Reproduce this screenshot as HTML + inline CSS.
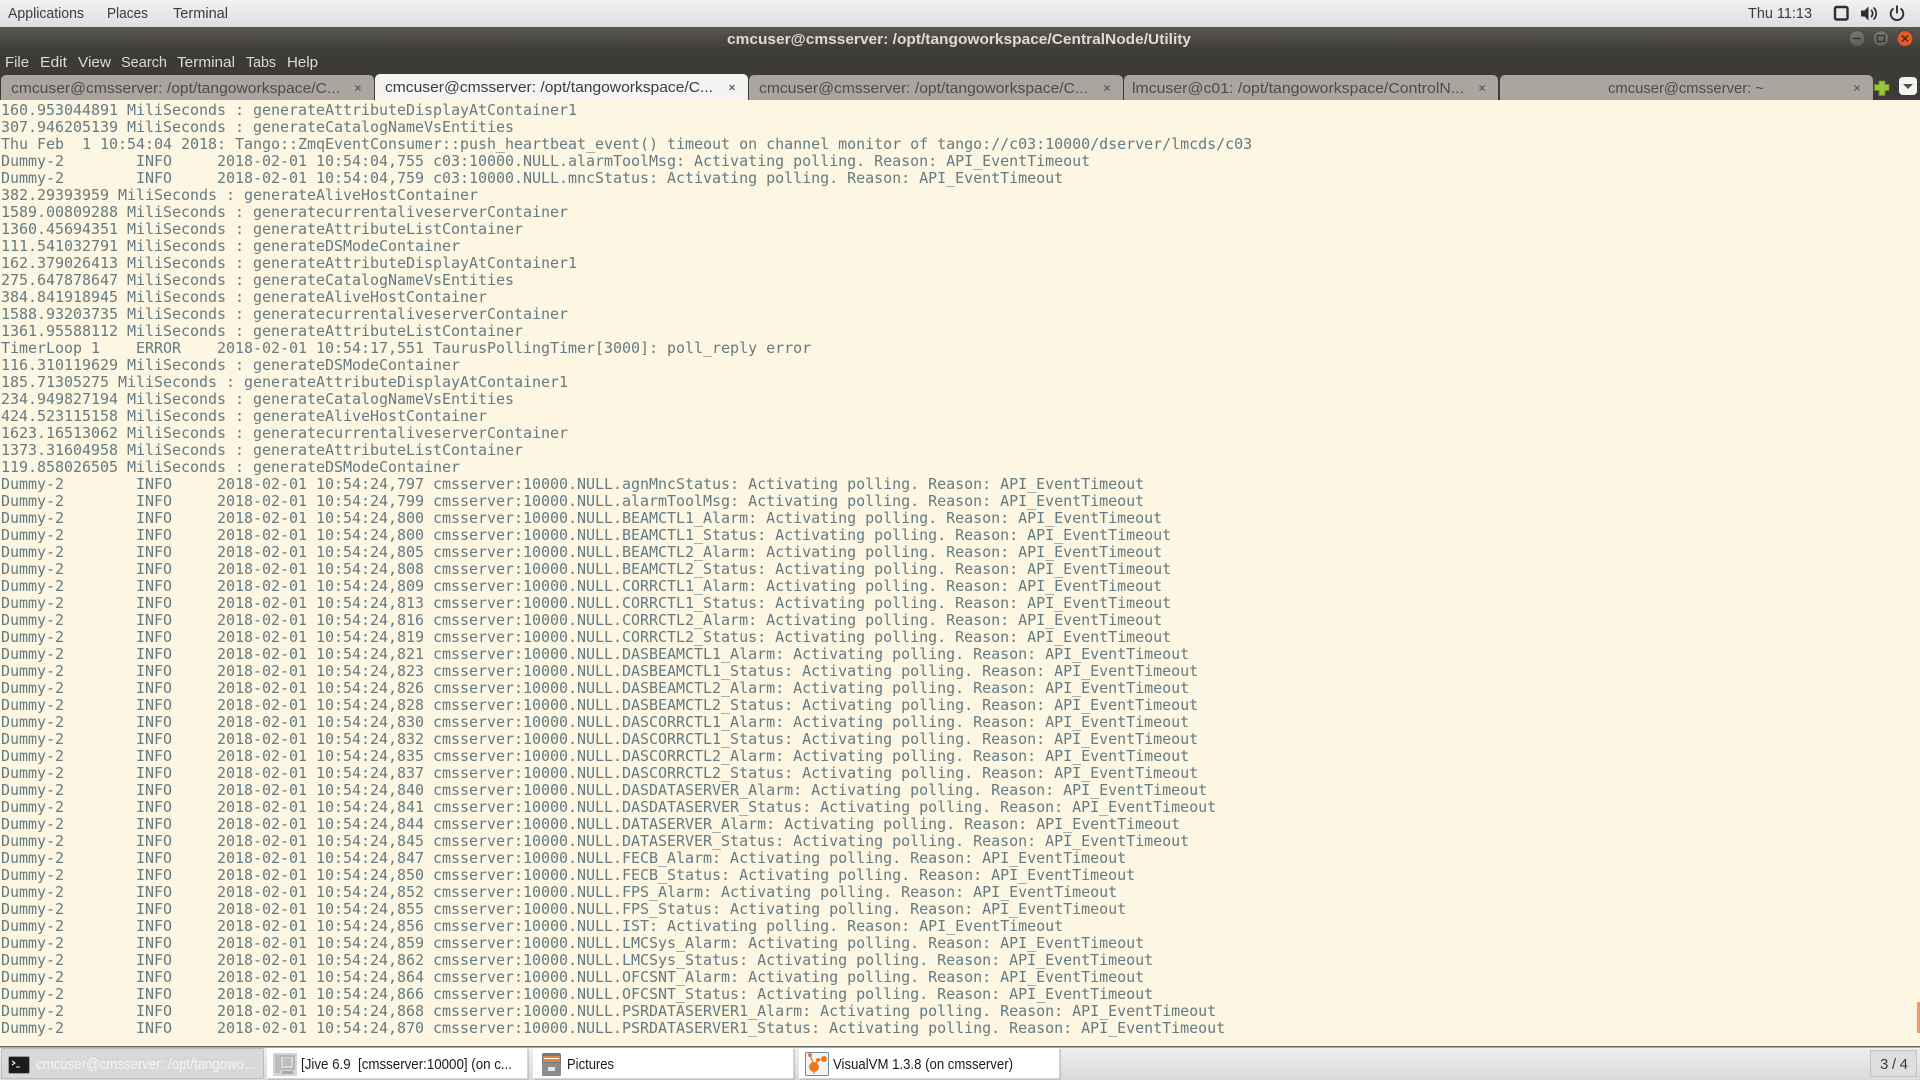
<!DOCTYPE html>
<html><head><meta charset="utf-8"><style>
html,body{margin:0;padding:0;width:1920px;height:1080px;overflow:hidden;background:#fdf6e3}
#t{position:absolute;left:1px;top:102px;margin:0;font:15px/17px "DejaVu Sans Mono",monospace;letter-spacing:-0.03px;color:#657b83;white-space:pre}
svg{position:absolute;left:0;top:0}
svg text{font-family:"Liberation Sans",sans-serif;font-size:15px;white-space:pre}
</style></head><body>
<pre id="t">160.953044891 MiliSeconds : generateAttributeDisplayAtContainer1
307.946205139 MiliSeconds : generateCatalogNameVsEntities
Thu Feb  1 10:54:04 2018: Tango::ZmqEventConsumer::push_heartbeat_event() timeout on channel monitor of tango://c03:10000/dserver/lmcds/c03
Dummy-2        INFO     2018-02-01 10:54:04,755 c03:10000.NULL.alarmToolMsg: Activating polling. Reason: API_EventTimeout
Dummy-2        INFO     2018-02-01 10:54:04,759 c03:10000.NULL.mncStatus: Activating polling. Reason: API_EventTimeout
382.29393959 MiliSeconds : generateAliveHostContainer
1589.00809288 MiliSeconds : generatecurrentaliveserverContainer
1360.45694351 MiliSeconds : generateAttributeListContainer
111.541032791 MiliSeconds : generateDSModeContainer
162.379026413 MiliSeconds : generateAttributeDisplayAtContainer1
275.647878647 MiliSeconds : generateCatalogNameVsEntities
384.841918945 MiliSeconds : generateAliveHostContainer
1588.93203735 MiliSeconds : generatecurrentaliveserverContainer
1361.95588112 MiliSeconds : generateAttributeListContainer
TimerLoop 1    ERROR    2018-02-01 10:54:17,551 TaurusPollingTimer[3000]: poll_reply error
116.310119629 MiliSeconds : generateDSModeContainer
185.71305275 MiliSeconds : generateAttributeDisplayAtContainer1
234.949827194 MiliSeconds : generateCatalogNameVsEntities
424.523115158 MiliSeconds : generateAliveHostContainer
1623.16513062 MiliSeconds : generatecurrentaliveserverContainer
1373.31604958 MiliSeconds : generateAttributeListContainer
119.858026505 MiliSeconds : generateDSModeContainer
Dummy-2        INFO     2018-02-01 10:54:24,797 cmsserver:10000.NULL.agnMncStatus: Activating polling. Reason: API_EventTimeout
Dummy-2        INFO     2018-02-01 10:54:24,799 cmsserver:10000.NULL.alarmToolMsg: Activating polling. Reason: API_EventTimeout
Dummy-2        INFO     2018-02-01 10:54:24,800 cmsserver:10000.NULL.BEAMCTL1_Alarm: Activating polling. Reason: API_EventTimeout
Dummy-2        INFO     2018-02-01 10:54:24,800 cmsserver:10000.NULL.BEAMCTL1_Status: Activating polling. Reason: API_EventTimeout
Dummy-2        INFO     2018-02-01 10:54:24,805 cmsserver:10000.NULL.BEAMCTL2_Alarm: Activating polling. Reason: API_EventTimeout
Dummy-2        INFO     2018-02-01 10:54:24,808 cmsserver:10000.NULL.BEAMCTL2_Status: Activating polling. Reason: API_EventTimeout
Dummy-2        INFO     2018-02-01 10:54:24,809 cmsserver:10000.NULL.CORRCTL1_Alarm: Activating polling. Reason: API_EventTimeout
Dummy-2        INFO     2018-02-01 10:54:24,813 cmsserver:10000.NULL.CORRCTL1_Status: Activating polling. Reason: API_EventTimeout
Dummy-2        INFO     2018-02-01 10:54:24,816 cmsserver:10000.NULL.CORRCTL2_Alarm: Activating polling. Reason: API_EventTimeout
Dummy-2        INFO     2018-02-01 10:54:24,819 cmsserver:10000.NULL.CORRCTL2_Status: Activating polling. Reason: API_EventTimeout
Dummy-2        INFO     2018-02-01 10:54:24,821 cmsserver:10000.NULL.DASBEAMCTL1_Alarm: Activating polling. Reason: API_EventTimeout
Dummy-2        INFO     2018-02-01 10:54:24,823 cmsserver:10000.NULL.DASBEAMCTL1_Status: Activating polling. Reason: API_EventTimeout
Dummy-2        INFO     2018-02-01 10:54:24,826 cmsserver:10000.NULL.DASBEAMCTL2_Alarm: Activating polling. Reason: API_EventTimeout
Dummy-2        INFO     2018-02-01 10:54:24,828 cmsserver:10000.NULL.DASBEAMCTL2_Status: Activating polling. Reason: API_EventTimeout
Dummy-2        INFO     2018-02-01 10:54:24,830 cmsserver:10000.NULL.DASCORRCTL1_Alarm: Activating polling. Reason: API_EventTimeout
Dummy-2        INFO     2018-02-01 10:54:24,832 cmsserver:10000.NULL.DASCORRCTL1_Status: Activating polling. Reason: API_EventTimeout
Dummy-2        INFO     2018-02-01 10:54:24,835 cmsserver:10000.NULL.DASCORRCTL2_Alarm: Activating polling. Reason: API_EventTimeout
Dummy-2        INFO     2018-02-01 10:54:24,837 cmsserver:10000.NULL.DASCORRCTL2_Status: Activating polling. Reason: API_EventTimeout
Dummy-2        INFO     2018-02-01 10:54:24,840 cmsserver:10000.NULL.DASDATASERVER_Alarm: Activating polling. Reason: API_EventTimeout
Dummy-2        INFO     2018-02-01 10:54:24,841 cmsserver:10000.NULL.DASDATASERVER_Status: Activating polling. Reason: API_EventTimeout
Dummy-2        INFO     2018-02-01 10:54:24,844 cmsserver:10000.NULL.DATASERVER_Alarm: Activating polling. Reason: API_EventTimeout
Dummy-2        INFO     2018-02-01 10:54:24,845 cmsserver:10000.NULL.DATASERVER_Status: Activating polling. Reason: API_EventTimeout
Dummy-2        INFO     2018-02-01 10:54:24,847 cmsserver:10000.NULL.FECB_Alarm: Activating polling. Reason: API_EventTimeout
Dummy-2        INFO     2018-02-01 10:54:24,850 cmsserver:10000.NULL.FECB_Status: Activating polling. Reason: API_EventTimeout
Dummy-2        INFO     2018-02-01 10:54:24,852 cmsserver:10000.NULL.FPS_Alarm: Activating polling. Reason: API_EventTimeout
Dummy-2        INFO     2018-02-01 10:54:24,855 cmsserver:10000.NULL.FPS_Status: Activating polling. Reason: API_EventTimeout
Dummy-2        INFO     2018-02-01 10:54:24,856 cmsserver:10000.NULL.IST: Activating polling. Reason: API_EventTimeout
Dummy-2        INFO     2018-02-01 10:54:24,859 cmsserver:10000.NULL.LMCSys_Alarm: Activating polling. Reason: API_EventTimeout
Dummy-2        INFO     2018-02-01 10:54:24,862 cmsserver:10000.NULL.LMCSys_Status: Activating polling. Reason: API_EventTimeout
Dummy-2        INFO     2018-02-01 10:54:24,864 cmsserver:10000.NULL.OFCSNT_Alarm: Activating polling. Reason: API_EventTimeout
Dummy-2        INFO     2018-02-01 10:54:24,866 cmsserver:10000.NULL.OFCSNT_Status: Activating polling. Reason: API_EventTimeout
Dummy-2        INFO     2018-02-01 10:54:24,868 cmsserver:10000.NULL.PSRDATASERVER1_Alarm: Activating polling. Reason: API_EventTimeout
Dummy-2        INFO     2018-02-01 10:54:24,870 cmsserver:10000.NULL.PSRDATASERVER1_Status: Activating polling. Reason: API_EventTimeout</pre>
<svg width="1920" height="1080" viewBox="0 0 1920 1080" xmlns="http://www.w3.org/2000/svg">
<defs>
<linearGradient id="gp" x1="0" y1="0" x2="0" y2="1"><stop offset="0" stop-color="#f2f2f2"/><stop offset="1" stop-color="#dedede"/></linearGradient>
<linearGradient id="gt" x1="0" y1="0" x2="0" y2="1"><stop offset="0" stop-color="#5a584f"/><stop offset="1" stop-color="#3c3b37"/></linearGradient>
<linearGradient id="gb" x1="0" y1="0" x2="0" y2="1"><stop offset="0" stop-color="#f0f0f0"/><stop offset="1" stop-color="#d9d9d9"/></linearGradient>
<linearGradient id="gc" x1="0" y1="0" x2="0" y2="1"><stop offset="0" stop-color="#777"/><stop offset="1" stop-color="#5d5c58"/></linearGradient>
</defs>
<!-- top panel -->
<rect x="0" y="0" width="1920" height="27" fill="url(#gp)"/>
<g fill="#3c3c3c">
<text x="8" y="18" textLength="76" lengthAdjust="spacingAndGlyphs">Applications</text>
<text x="107" y="18" textLength="41" lengthAdjust="spacingAndGlyphs">Places</text>
<text x="173" y="18" textLength="55" lengthAdjust="spacingAndGlyphs">Terminal</text>
<text x="1748" y="18" textLength="64" lengthAdjust="spacingAndGlyphs">Thu 11:13</text>
</g>
<rect x="1835" y="7" width="12.5" height="12.5" rx="1.5" fill="#e8e8e8" stroke="#2e2e2e" stroke-width="2.4"/>
<path d="M1861 10.5h3.5l4-4v14l-4-4H1861z" fill="#2e2e2e"/>
<path d="M1871 10a4.500 4.500 0 0 1 0 7M1873.500 7.500a8 8 0 0 1 0 12" fill="none" stroke="#2e2e2e" stroke-width="1.7"/>
<path d="M1893.500 8.500a6.300 6.300 0 1 0 7 0" fill="none" stroke="#2e2e2e" stroke-width="1.9"/>
<path d="M1897 5.500v8" fill="none" stroke="#2e2e2e" stroke-width="1.9"/>
<!-- title bar -->
<rect x="0" y="27" width="1920" height="73" fill="#3c3b37"/>
<rect x="0" y="27" width="1920" height="24" fill="url(#gt)"/>
<text x="727" y="44" textLength="464" lengthAdjust="spacingAndGlyphs" fill="#dfdbd2" style="font-weight:bold">cmcuser@cmsserver: /opt/tangoworkspace/CentralNode/Utility</text>
<circle cx="1857" cy="38.5" r="8" fill="url(#gc)" stroke="#44433e"/>
<path d="M1853 38.5h8" stroke="#33322e" stroke-width="1.4"/>
<circle cx="1881" cy="38.5" r="8" fill="url(#gc)" stroke="#44433e"/>
<rect x="1877.500" y="35.500" width="7" height="6" fill="none" stroke="#33322e" stroke-width="1.3"/>
<circle cx="1905" cy="38.5" r="8" fill="#e65a26" stroke="#44433e"/>
<path d="M1902 35.500l6 6M1908 35.500l-6 6" stroke="#3a2a20" stroke-width="1.4"/>
<!-- menu -->
<g fill="#dfdbd2">
<text x="5" y="67" textLength="24" lengthAdjust="spacingAndGlyphs">File</text>
<text x="40" y="67" textLength="27" lengthAdjust="spacingAndGlyphs">Edit</text>
<text x="78" y="67" textLength="33" lengthAdjust="spacingAndGlyphs">View</text>
<text x="121" y="67" textLength="46" lengthAdjust="spacingAndGlyphs">Search</text>
<text x="177" y="67" textLength="58" lengthAdjust="spacingAndGlyphs">Terminal</text>
<text x="246" y="67" textLength="30" lengthAdjust="spacingAndGlyphs">Tabs</text>
<text x="287" y="67" textLength="31" lengthAdjust="spacingAndGlyphs">Help</text>
</g>
<!-- tabs -->
<g fill="#aaa69f">
<path d="M1 100V80a5 5 0 0 1 5-5H369a5 5 0 0 1 5 5v20z"/>
<path d="M749 100V80a5 5 0 0 1 5-5H1118a5 5 0 0 1 5 5v20z"/>
<path d="M1124 100V80a5 5 0 0 1 5-5H1493a5 5 0 0 1 5 5v20z"/>
<path d="M1500 100V80a5 5 0 0 1 5-5H1868a5 5 0 0 1 5 5v20z"/>
</g>
<path d="M375 100V79a5 5 0 0 1 5-5H743a5 5 0 0 1 5 5v21z" fill="#f5f4f2"/>
<g fill="#4c4c4c">
<text x="11" y="93" textLength="329" lengthAdjust="spacingAndGlyphs">cmcuser@cmsserver: /opt/tangoworkspace/C...</text>
<text x="759" y="93" textLength="329" lengthAdjust="spacingAndGlyphs">cmcuser@cmsserver: /opt/tangoworkspace/C...</text>
<text x="1132" y="93" textLength="332" lengthAdjust="spacingAndGlyphs">lmcuser@c01: /opt/tangoworkspace/ControlN...</text>
<text x="1608" y="93" textLength="156" lengthAdjust="spacingAndGlyphs">cmcuser@cmsserver: ~</text>
</g>
<text x="385" y="92" textLength="328" lengthAdjust="spacingAndGlyphs" fill="#3c3c3c">cmcuser@cmsserver: /opt/tangoworkspace/C...</text>
<g stroke="#555" stroke-width="1.2">
<path d="M355.500 85.500l5 5M360.500 85.500l-5 5"/>
<path d="M729.500 85l5 5M734.500 85l-5 5"/>
<path d="M1104.500 85.500l5 5M1109.500 85.500l-5 5"/>
<path d="M1479.500 85.500l5 5M1484.500 85.500l-5 5"/>
<path d="M1854.500 85.500l5 5M1859.500 85.500l-5 5"/>
</g>
<path d="M1879 81h6v3.500h4v6h-4v5h-6v-5h-4.500v-6h4.500z" fill="#9cc33b" stroke="#6e8f24" stroke-width="0.8"/>
<rect x="1899" y="77" width="18" height="18" rx="4" fill="#f4f4f2"/>
<path d="M1903 84h10l-5 5z" fill="#55534e"/>
<!-- terminal scroll mark -->
<rect x="1917" y="1002" width="3" height="31" fill="#f4956a"/>
<!-- taskbar -->
<rect x="0" y="1047" width="1920" height="33" fill="url(#gb)"/>
<rect x="0" y="1046" width="1920" height="1.500" fill="#666"/>
<rect x="1.500" y="1048.500" width="262" height="30" rx="1" fill="#d8d8d8" stroke="#bdbdbd"/>
<rect x="267" y="1048" width="261" height="31" rx="1.500" fill="#fff"/>
<rect x="533" y="1048" width="261" height="31" rx="1.500" fill="#fff"/>
<rect x="799" y="1048" width="261" height="31" rx="1.500" fill="#fff"/>
<path d="M528 1049v30h-260M794 1049v30h-260M1060 1049v30h-260" fill="none" stroke="#a8a8a8"/>
<text x="36" y="1069" textLength="219" lengthAdjust="spacingAndGlyphs" fill="#f0f8ec">cmcuser@cmsserver: /opt/tangowo...</text>
<g fill="#1c1c1c">
<text x="301" y="1069" textLength="211" lengthAdjust="spacingAndGlyphs" xml:space="preserve">[Jive 6.9  [cmsserver:10000] (on c...</text>
<text x="567" y="1069" textLength="47" lengthAdjust="spacingAndGlyphs">Pictures</text>
<text x="833" y="1069" textLength="180" lengthAdjust="spacingAndGlyphs">VisualVM 1.3.8 (on cmsserver)</text>
</g>
<!-- terminal icon -->
<rect x="8.500" y="1056.500" width="21" height="17" rx="1.500" fill="#1c1c1c" stroke="#9a9a9a"/>
<path d="M12 1061l3 2-3 2M16 1067h4" fill="none" stroke="#eee" stroke-width="1.100"/>
<!-- jive icon -->
<rect x="273" y="1053" width="24" height="23" fill="#d4d4d4"/>
<rect x="279" y="1055" width="16" height="15" fill="#b4b4b4"/>
<rect x="281" y="1057" width="12" height="11" fill="#d6d6d6"/>
<path d="M283 1059h8M283 1061h8M283 1063h8M283 1065h8" stroke="#a4a4a4"/>
<rect x="275" y="1055" width="5" height="18" fill="#bcbcbc"/>
<rect x="282" y="1071" width="11" height="3" fill="#a8a8a8"/>
<!-- pictures icon -->
<rect x="542" y="1053" width="19" height="23" rx="2" fill="#777"/>
<rect x="543" y="1056" width="17" height="6" fill="#e9823a"/>
<rect x="544" y="1058" width="15" height="1" fill="#fff"/>
<rect x="542" y="1063" width="19" height="13" rx="1.500" fill="#8c8c88"/>
<rect x="548" y="1067" width="7" height="4" fill="#e4e4e4"/>
<!-- visualvm icon -->
<rect x="805.500" y="1052.500" width="23" height="23" rx="1.500" fill="#f4f4f4" stroke="#6d8aa5"/>
<circle cx="814" cy="1067" r="5" fill="#ee7722"/>
<circle cx="810" cy="1055" r="2" fill="#ee7722"/>
<circle cx="824" cy="1059" r="3" fill="#ee7722"/>
<circle cx="818" cy="1060" r="2" fill="#ee7722"/>
<path d="M814 1066L810 1055M814 1066L818 1060L824 1059M814 1067v7" stroke="#ee7722" stroke-width="1.200" fill="none"/>
<!-- workspace -->
<rect x="1870.500" y="1050.500" width="46" height="26" fill="#dedede" stroke="#c4c4c4"/>
<text x="1880" y="1069" textLength="28" lengthAdjust="spacing" fill="#3c3c3c">3 / 4</text>
</svg>
</body></html>
